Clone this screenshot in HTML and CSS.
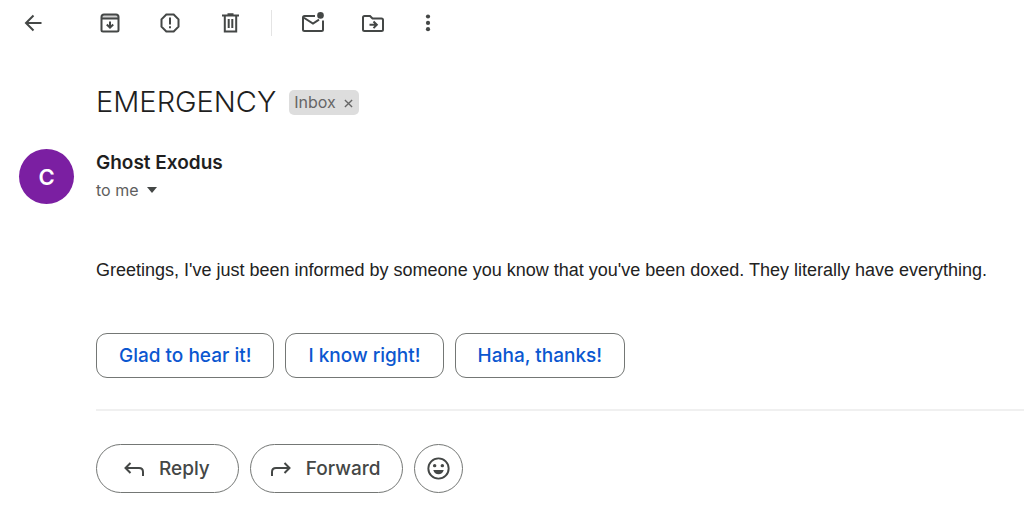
FILE: index.html
```
<!DOCTYPE html>
<html lang="en">
	<head>
		<meta charset="utf-8">
		<title>EMERGENCY</title>
		<link rel="stylesheet" href="styles.css">
	</head>
	<body>
		<div class="toolbar">
			<button class="icon back" aria-label="Back">
				<svg viewBox="0 0 26 26"><path d="M13.500 5.500L6 13l7.500 7.500M6 13h15.500"/></svg>
			</button>
			<button class="icon" aria-label="Archive">
				<svg viewBox="0 0 26 26"><path class="tint" d="M5 5h16v3H5z"/><path d="M4.500 7q0-2.500 2.500-2.500h12q2.500 0 2.500 2.500v13q0 1.500-1.500 1.500H6q-1.500 0-1.500-1.500zM4.500 8.500h17M13 11.500v6M9.800 14.500l3.200 3.200 3.200-3.200"/></svg>
			</button>
			<button class="icon" aria-label="Report spam">
				<svg viewBox="0 0 26 26"><path d="M9.300 4.500h7.400l4.800 4.800v7.400l-4.800 4.800H9.300l-4.800-4.800V9.300zM13 7.500v7M13 16.300v2"/></svg>
			</button>
			<button class="icon" aria-label="Delete">
				<svg viewBox="0 0 26 26"><path d="M5 5.500h17M10.500 4.300h6M7.800 6v15.500h11.400V6M11.700 9v9M15.300 9v9"/></svg>
			</button>
			<span class="divider"></span>
			<button class="icon" aria-label="Mark as unread">
				<svg viewBox="0 0 26 26"><path d="M15 6H4.500Q3 6 3 7.500v12q0 1.500 1.500 1.500h17q1.500 0 1.500-1.500v-9M3.500 7.500l9.500 6 6-3.800"/><circle class="solid" cx="20.500" cy="5.400" r="3.300"/></svg>
			</button>
			<button class="icon" aria-label="Move to">
				<svg viewBox="0 0 26 26"><path d="M4.500 6h5.500l2.500 2.500h9q1.500 0 1.500 1.500v9.500q0 1.500-1.500 1.500H4.500Q3 21 3 19.500v-12Q3 6 4.500 6zM9.500 14.800h7M13.500 11.500l3.300 3.300-3.300 3.300"/></svg>
			</button>
			<button class="icon more" aria-label="More">
				<svg viewBox="0 0 26 26"><g class="solid"><circle cx="13" cy="6.500" r="2.100"/><circle cx="13" cy="12.900" r="2.100"/><circle cx="13" cy="19.200" r="2.100"/></g></svg>
			</button>
		</div>
		<div class="subject">
			<h1>EMERGENCY</h1>
			<span class="label">Inbox <button class="remove" aria-label="Remove label"><svg viewBox="0 0 10 10"><path d="M1 1l8 8M9 1l-8 8"/></svg></button></span>
		</div>
		<div class="sender">
			<div class="avatar">C</div>
			<div>
				<div class="name">Ghost Exodus</div>
				<button class="to">to me <span class="caret"></span></button>
			</div>
		</div>
		<div class="message">
			<p>Greetings, I've just been informed by someone you know that you've been doxed. They literally have everything.</p>
			<div class="row suggestions">
				<button>Glad to hear it!</button>
				<button>I know right!</button>
				<button>Haha, thanks!</button>
			</div>
			<div class="row actions">
				<button>
					<svg viewBox="0 0 22 22"><path d="M7.500 5L2.500 10l5 5M2.500 10H16q4 0 4 4v4"/></svg>
					Reply
				</button>
				<button class="forward">
					<svg viewBox="0 0 22 22"><path d="M14.500 5l5 5-5 5M19.500 10H6q-4 0-4 4v4"/></svg>
					Forward
				</button>
				<button class="emoji" aria-label="Add reaction">
					<svg viewBox="0 0 24 24"><circle cx="12" cy="12" r="10.600"/><circle class="solid" cx="8" cy="9" r="1.800"/><circle class="solid" cx="16" cy="9" r="1.800"/><path class="solid" d="M6.500 13.500h11q-1.500 4.500-5.500 4.500t-5.500-4.500z"/></svg>
				</button>
			</div>
		</div>
	</body>
</html>
```
FILE: styles.css
```
body {
	margin: 0;
	background: #fff;
	color: #1f1f1f;
	font-family: Inter, "Liberation Sans", sans-serif;
}
button {
	font: inherit;
	color: inherit;
	background: none;
	border: 0;
	padding: 0;
	cursor: pointer;
}
svg {
	display: block;
	fill: none;
	stroke: #444746;
	stroke-width: 2;
}
.solid {
	fill: #444746;
	stroke: none;
}
.tint {
	fill: #d0d0d0;
	stroke: none;
}
.toolbar {
	display: flex;
	align-items: center;
	height: 46px;
	padding-left: 20px;
	gap: 34px;
}
.icon svg {
	width: 26px;
	height: 26px;
}
.back {
	margin-right: 17px;
}
.divider {
	width: 1px;
	height: 26px;
	margin: 0 -6px;
	background: #e4e4e4;
}
.more {
	margin-left: -5px;
}
.subject {
	display: flex;
	align-items: center;
	gap: 13px;
	margin-top: 36px;
	padding-left: 96px;
}
h1 {
	margin: 0;
	font-size: 29px;
	line-height: 40px;
	font-weight: 300;
}
.label {
	display: flex;
	align-items: center;
	gap: 8px;
	padding: 0 6px 0 5px;
	border-radius: 5px;
	background: #ddd;
	color: #666;
	font-size: 16px;
	line-height: 25px;
}
.remove {
	padding-top: 2px;
}
.remove svg {
	width: 9px;
	height: 9px;
	stroke: #666;
	stroke-width: 1.5;
}
.sender {
	display: flex;
	gap: 22px;
	margin-top: 27px;
	padding-left: 19px;
}
.avatar {
	width: 55px;
	height: 55px;
	border-radius: 50%;
	background: #7b1fa2;
	color: #fff;
	font-size: 22px;
	font-weight: 600;
	line-height: 56px;
	text-align: center;
}
.name {
	font-size: 19px;
	font-weight: 600;
	line-height: 27px;
}
.to {
	display: flex;
	align-items: center;
	gap: 8px;
	color: #5e5e5e;
	font-size: 16px;
	line-height: 28px;
}
.caret {
	border: 5px solid transparent;
	border-top: 6px solid #444746;
	border-bottom: 0;
}
.message {
	padding-left: 96px;
}
.message p {
	margin: 53px 0 0;
	color: #222;
	font-family: "Liberation Sans", Arial, sans-serif;
	font-size: 18px;
	line-height: 26px;
}
.row {
	display: flex;
	gap: 11px;
}
.suggestions {
	padding: 50px 0 31px;
	border-bottom: 2px solid #f0f0f0;
}
.suggestions button {
	padding: 0 22px;
	border: 1px solid #747775;
	border-radius: 11px;
	color: #0b57d0;
	font-size: 19px;
	font-weight: 500;
	line-height: 43px;
}
.actions {
	padding: 33px 0 16px;
}
.actions button {
	display: flex;
	align-items: center;
	gap: 14px;
	padding: 0 28px 0 26px;
	border: 1px solid #747775;
	border-radius: 25px;
	color: #444746;
	font-size: 19px;
	font-weight: 500;
	line-height: 47px;
}
.actions svg {
	width: 22px;
	height: 22px;
}
.actions .forward {
	padding: 0 21px 0 19px;
}
.actions .emoji {
	padding: 0 12px;
}
.emoji svg {
	width: 23px;
	height: 23px;
}
```
